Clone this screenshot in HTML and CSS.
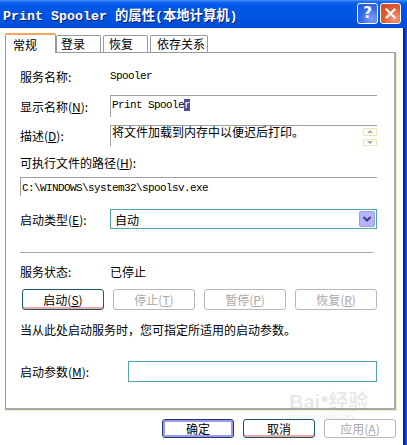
FILE: index.html
```html
<!DOCTYPE html>
<html lang="zh-CN">
<head>
<meta charset="utf-8">
<title>Print Spooler 的属性(本地计算机)</title>
<link rel="stylesheet" href="styles.css">
</head>
<body>
<div class="window">
  <div class="titlebar">
    <span class="title">Print Spooler 的属性(本地计算机)</span>
    <div class="caption-btns">
      <button class="cap help">?</button>
      <button class="cap close" aria-label="关闭">
        <svg width="11" height="11" viewBox="0 0 11 11"><path d="M1.5 1.5 L9.5 9.5 M9.5 1.5 L1.5 9.5" stroke="#fff" stroke-width="2.2" stroke-linecap="square"/></svg>
      </button>
    </div>
  </div>
  <div class="frame-row">
    <div class="client">
      <div class="tabs">
        <div class="tab sel">常规</div>
        <div class="tab t2">登录</div>
        <div class="tab t3">恢复</div>
        <div class="tab t4">依存关系</div>
      </div>
      <div class="panel">
        <div class="row r-name">
          <span class="lbl">服务名称:</span>
          <span class="m">Spooler</span>
        </div>
        <div class="row r-disp">
          <span class="lbl">显示名称(<u>N</u>):</span>
          <div class="field disp"><span class="m">Print Spoole<span class="hl">r</span></span></div>
        </div>
        <div class="row r-desc">
          <span class="lbl">描述(<u>D</u>):</span>
          <div class="field desc">
            <span class="desc-text">将文件加载到内存中以便迟后打印。</span>
            <div class="spin">
              <span class="spin-btn"><i class="tri up"></i></span>
              <span class="spin-btn"><i class="tri down"></i></span>
            </div>
          </div>
        </div>
        <div class="row r-plabel">可执行文件的路径(<u>H</u>):</div>
        <div class="row r-path">
          <div class="field path"><span class="m">C:\WINDOWS\system32\spoolsv.exe</span></div>
        </div>
        <div class="row r-type">
          <span class="lbl">启动类型(<u>E</u>):</span>
          <div class="combo">
            <span class="combo-text">自动</span>
            <span class="drop">
              <svg width="10" height="8" viewBox="0 0 10 8"><path d="M1.5 2 L5 5.5 L8.5 2" fill="none" stroke="#3a3a96" stroke-width="2"/></svg>
            </span>
          </div>
        </div>
        <div class="sep"></div>
        <div class="row r-status">
          <span class="lbl">服务状态:</span>
          <span>已停止</span>
        </div>
        <div class="svc-btns">
          <button class="btn on">启动(<u>S</u>)</button>
          <button class="btn off">停止(<u>T</u>)</button>
          <button class="btn off">暂停(<u>P</u>)</button>
          <button class="btn off">恢复(<u>R</u>)</button>
        </div>
        <div class="row r-note">当从此处启动服务时，您可指定所适用的启动参数。</div>
        <div class="row r-param">
          <span class="lbl wide">启动参数(<u>M</u>):</span>
          <div class="param-input"></div>
        </div>
      </div>
      <div class="dlg-btns">
        <button class="btn dlg default">确定</button>
        <button class="btn dlg on">取消</button>
        <button class="btn dlg off">应用(<u>A</u>)</button>
      </div>
      <div class="watermark">
        <span class="wm-logo">Bai<span class="paw">●</span>经验</span>
        <span class="wm-url">jingyan.baidu.com</span>
      </div>
    </div>
    <div class="frame-right"></div>
  </div>
</div>
</body>
</html>
```
FILE: styles.css
```css
html, body {
  margin: 0;
  padding: 0;
}
body {
  width: 407px;
  height: 445px;
  overflow: hidden;
  background: #fff;
  font-family: "Noto Sans CJK SC", "Liberation Sans", sans-serif;
  font-size: 12px;
  color: #000;
}
u { text-decoration: underline; }

.window {
  width: 407px;
  height: 445px;
  display: flex;
  flex-direction: column;
}

/* title bar */
.titlebar {
  height: 28px;
  flex: none;
  box-sizing: border-box;
  display: flex;
  align-items: center;
  justify-content: space-between;
  padding: 0 6px 0 3px;
  background: linear-gradient(#4a92f8 0, #1568f0 2px, #0058e6 5px, #0054e3 65%, #004cd6 100%);
}
.title {
  color: #fff;
  font-family: "Liberation Mono", "Noto Sans CJK SC", monospace;
  font-weight: bold;
  font-size: 13.33px;
  text-shadow: 1px 1px 0 #0a1c6e;
  white-space: nowrap;
}
.caption-btns {
  display: flex;
  gap: 2px;
  margin-top: -1px;
}
.cap {
  width: 21px;
  height: 21px;
  box-sizing: border-box;
  border: 1px solid #fff;
  border-radius: 3px;
  padding: 0;
  display: flex;
  align-items: center;
  justify-content: center;
}
.help {
  background: radial-gradient(circle at 72% 78%, #7aa0f8, #3468ec 55%, #1f52dc);
  color: #fff;
  font-family: "DejaVu Sans", sans-serif;
  font-weight: bold;
  font-size: 15px;
  line-height: 19px;
}
.close {
  background: radial-gradient(circle at 72% 78%, #f39a78, #e35a30 55%, #cf4421);
}

/* frame */
.frame-row {
  flex: 1;
  display: flex;
  min-height: 0;
}
.client {
  flex: 1;
  position: relative;
  background: #fff;
}
.frame-right {
  width: 4px;
  flex: none;
  background: linear-gradient(to right, #0020b0 0, #0020b0 2px, #0b48d8 2px);
}

/* tabs */
.tabs {
  display: flex;
  align-items: flex-end;
  height: 20px;
  margin: 5px 0 -1px 5px;
  position: relative;
  z-index: 1;
}
.tab {
  box-sizing: border-box;
  height: 17px;
  margin-bottom: 1px;
  border: 1px solid #9a9a9a;
  border-bottom: none;
  border-radius: 2px 2px 0 0;
  background: #fff;
  padding-left: 4px;
  line-height: 16px;
  white-space: nowrap;
}
.tab.sel {
  width: 51px;
  height: 20px;
  margin-bottom: 0;
  border-top: 2px solid #f5a65b;
  padding-left: 7px;
  line-height: 19px;
}
.tab.t2 { width: 45px; }
.tab.t3 { width: 45px; margin-left: 2px; padding-left: 5px; }
.tab.t4 { width: 58px; margin-left: 2px; padding-left: 6px; }

/* panel */
.panel {
  box-sizing: border-box;
  margin-left: 5px;
  width: 391px;
  height: 358px;
  border-left: 1px solid #9a9a9a;
  border-top: 1px solid #9a9a9a;
  border-right: 2px solid #a8a8a8;
  border-bottom: 2px solid #a8a8a8;
  box-shadow: 1px 1px 0 #f4f0c4;
  padding: 13px 17px 0 14px;
}
.row {
  display: flex;
  align-items: center;
  white-space: nowrap;
}
.lbl {
  width: 90px;
  flex: none;
}
.lbl.wide { width: 108px; }
.m {
  font-family: "Liberation Mono", monospace;
  font-size: 11px;
  letter-spacing: -0.6px;
}
.hl {
  background: #4c4ca8;
  color: #fff;
}

.r-name { height: 20px; }
.r-disp { height: 22px; margin-top: 9px; }
.r-desc { height: 21px; margin-top: 8px; }
.r-plabel { height: 16px; margin-top: 8px; }
.r-path { height: 19px; margin-top: 7px; }
.r-type { height: 20px; margin-top: 13px; }
.r-status { height: 16px; margin-top: 10px; }
.r-note { height: 16px; margin-top: 11px; }
.r-param { height: 21px; margin-top: 24px; }

.field {
  box-sizing: border-box;
  border-top: 1px solid #a0a0a0;
  border-left: 1px solid #a0a0a0;
  align-self: stretch;
}
.disp {
  flex: 1;
  padding: 1px 0 0 1px;
  line-height: 12px;
}
.desc {
  flex: 1;
  display: flex;
  justify-content: space-between;
  padding-left: 1px;
}
.desc-text {
  line-height: 14px;
  margin-top: -1px;
}
.spin {
  display: flex;
  flex-direction: column;
  gap: 3px;
  padding-top: 2px;
}
.spin-btn {
  box-sizing: border-box;
  width: 14px;
  height: 8px;
  border: 1px solid #ece6b0;
  border-radius: 1px;
  display: flex;
  align-items: center;
  justify-content: center;
}
.tri {
  width: 0;
  height: 0;
  border-left: 3px solid transparent;
  border-right: 3px solid transparent;
}
.tri.up { border-bottom: 3px solid #a8a8a8; }
.tri.down { border-top: 3px solid #a8a8a8; }

.path {
  flex: 1;
  padding-left: 1px;
  line-height: 16px;
}

.combo {
  flex: 1;
  align-self: stretch;
  box-sizing: border-box;
  border: 1px solid #52a6a6;
  display: flex;
  align-items: center;
  justify-content: space-between;
  padding: 1px;
}
.combo-text { padding-left: 3px; }
.drop {
  box-sizing: border-box;
  width: 16px;
  height: 16px;
  background: #b4b4f6;
  border: 1px solid #9c9cea;
  border-radius: 2px;
  display: flex;
  align-items: center;
  justify-content: center;
}

.sep {
  width: 353px;
  height: 1px;
  background: #a8a8a8;
  margin-top: 23px;
}

/* buttons */
.btn {
  box-sizing: border-box;
  margin: 0;
  padding: 0;
  background: #fff;
  border: 1px solid #1d5866;
  border-radius: 3px;
  font-family: "Noto Sans CJK SC", sans-serif;
  font-size: 12px;
  color: #000;
  text-align: center;
  white-space: nowrap;
}
.btn.on { box-shadow: inset 0 -2px 0 #f2a6a6; }
.btn.off {
  border-color: #b8b8b8;
  color: #a8a8a8;
}
.svc-btns {
  display: grid;
  grid-template-columns: repeat(4, 82px);
  gap: 9px;
  height: 21px;
  margin: 10px 0 0 2px;
}
.svc-btns .btn { height: 21px; line-height: 19px; }

.param-input {
  flex: 1;
  align-self: stretch;
  border: 1px solid #52a6a6;
}

.dlg-btns {
  display: flex;
  justify-content: flex-end;
  gap: 9px;
  margin-top: 9px;
  padding-right: 7px;
}
.btn.dlg {
  width: 72px;
  height: 19px;
  line-height: 17px;
}
.btn.default {
  border-color: #22385e;
  box-shadow: inset 0 0 0 2px #9a9af4;
}

/* watermark */
.watermark {
  position: absolute;
  left: 289px;
  top: 360px;
  display: flex;
  flex-direction: column;
  pointer-events: none;
  color: rgba(150, 150, 150, 0.22);
  font-family: "Liberation Sans", "Noto Sans CJK SC", sans-serif;
  z-index: 2;
}
.wm-logo {
  font-size: 20px;
  font-weight: bold;
  line-height: 20px;
}
.paw {
  font-size: 14px;
  vertical-align: 6px;
}
.wm-url {
  font-size: 8px;
  line-height: 9px;
}
```
